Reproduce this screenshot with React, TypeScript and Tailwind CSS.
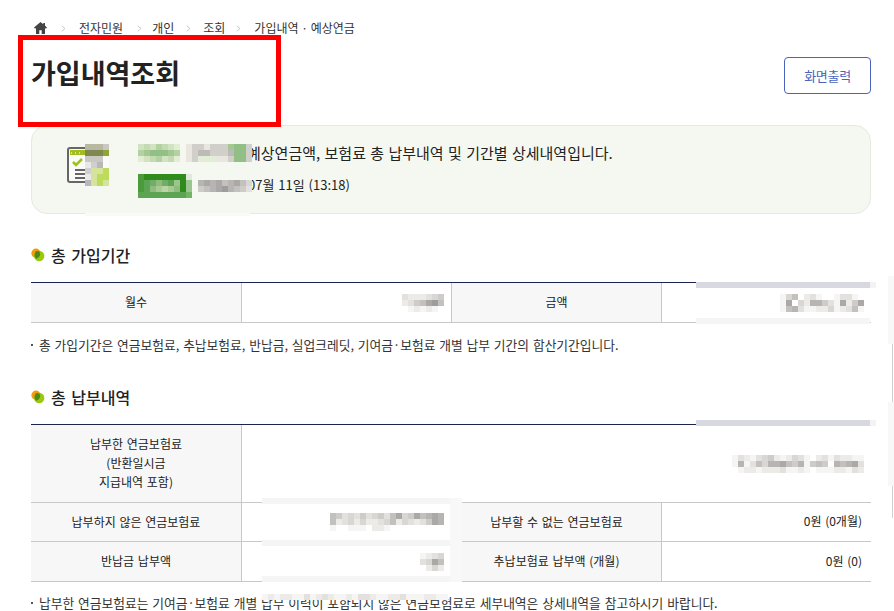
const GREY = ["#ffffff","#f5f5f3","#ecebe8","#e2e1dd","#d8d7d3","#cdccc8","#c2c1be","#b6b5b3","#aaa9a8","#9e9d9e"];
const GREEN = ["#f5f8f0","#e1edd5","#d2e3c2","#c3dab2","#b3d2a2","#a3c892","#92bf85","#e8e6df","#d0cfca","#bcbbb7"];
const HEAD = ["#4b9b3c","#5ba451","#70ac6a","#8fbb7d","#a9c994","#bcd3a4","#2f8c1c","#9ac590","#dfeadb","#74b266"];
const ICON = ["#b9b9a3","#c9c9c2","#8fa534","#80884f","#fafbf8","#e8e8e8","#cfcfcf","#b8b8b8","#d5e39c","#bddb5c"];

function Mosaic({ rows, palette = GREY }: { rows: string[]; palette?: string[] }) {
  return (
    <div className="flex shrink-0 flex-col">
      {rows.map((row, r) => (
        <div key={r} className="flex">
          {row.split("").map((c, i) => (
            <div key={i} className="h-[6px] w-[6px] shrink-0" style={{ backgroundColor: c === "." ? "transparent" : palette[Number(c)] }} />
          ))}
        </div>
      ))}
    </div>
  );
}

function Bullet() {
  return (
    <svg width="14" height="14" viewBox="0 0 14 14" className="shrink-0">
      <circle cx="5" cy="5.2" r="4.6" fill="#f59a0c" />
      <circle cx="8.2" cy="8" r="5.2" fill="#9cc80f" />
      <path d="M5.2 3.1a5.2 5.2 0 0 0-.1 7.6A4.6 4.6 0 0 0 8.4 3.600 5 5 0 0 0 5.200 3.100Z" fill="#4f8a12" />
    </svg>
  );
}

function Sep() {
  return (
    <svg width="5" height="7" viewBox="0 0 5 7" className="shrink-0">
      <path d="M.8.8 4 3.500.8 6.200" fill="none" stroke="#c8c8c8" strokeWidth="1" />
    </svg>
  );
}

function Th({ children, h }: { children: React.ReactNode; h: string }) {
  return (
    <div className={`flex items-center justify-center border-r border-b border-[#c8c8c8] bg-[#f7f7f7] pb-[2px] text-center text-[12px] leading-[19px] text-[#222] ${h}`}>
      <div>{children}</div>
    </div>
  );
}

function Td({ children, h }: { children?: React.ReactNode; h: string }) {
  return (
    <div className={`flex items-center justify-end border-b border-[#c8c8c8] pb-[2px] pr-[9px] text-[12px] text-[#222] ${h}`}>
      {children}
    </div>
  );
}

export default function App() {
  return (
    <div className="relative h-[611px] w-[894px] overflow-hidden bg-white pl-[31px] pr-[23px] font-['Noto_Sans_CJK_KR','Noto_Sans',sans-serif] text-[#222] [word-spacing:1px]">
      <nav className="flex h-[56px] items-center pl-[3px] text-[12px] text-[#333]">
        <svg width="13" height="12" viewBox="0 0 13 12" className="mr-[14px] shrink-0">
          <path d="M6.500 0 0 5.600 1 6.700l1-.8V12h3.300V8.200h2.400V12H11V5.900l1 .8 1-1.100L11 3.800V1H9.300v1.300Z" fill="#444" />
        </svg>
        <Sep />
        <span className="ml-[13px] mr-[14px]">전자민원</span>
        <Sep />
        <span className="ml-[10px] mr-[12px]">개인</span>
        <Sep />
        <span className="ml-[12px] mr-[11px]">조회</span>
        <Sep />
        <span className="ml-[13px] [word-spacing:0]">가입내역 · 예상연금</span>
      </nav>

      <div className="flex h-[69px] items-start justify-between">
        <h1 className="mt-[-1px] text-[27px] font-bold leading-[36px] text-[#222]">가입내역조회</h1>
        <button className="mt-[1px] h-[37px] w-[87px] rounded-[4px] border border-[#4a63bd] text-[13px] tracking-[-0.3px] text-[#4a63bd]">화면출력</button>
      </div>

      <section className="flex h-[89px] items-start rounded-[16px] border border-[#e6eadd] bg-[#f5f8f0] pl-[35px]">
        <div className="mt-[21px] flex h-[36px] w-[71px] shrink-0">
          <svg width="40" height="36" viewBox="0 0 40 36">
            <rect x="1" y="1" width="38" height="34" rx="2" fill="#fafbf8" stroke="#666" strokeWidth="2" />
            <rect x="3" y="3" width="34" height="5" fill="#a3bd1f" />
            <path d="M4 6h1M8 6h1M12 6h1" stroke="#e8f0c0" strokeWidth="1.500" />
            <path d="M6 15l3 3 6-6" fill="none" stroke="#9cc414" strokeWidth="2.500" />
            <path d="M8 23h10M8 27h10M8 31h10" stroke="#666" strokeWidth="1.800" />
          </svg>
        </div>
        <div className="pt-[18px]">
          <div className="flex h-[18px] items-center text-[15px]">
            <span className="relative z-10">
              <Mosaic rows={["2324321078878885668", "4566654078998889668", "1234231078111778668"]} palette={GREEN} />
            </span>
            <span className="ml-[-5px] whitespace-nowrap">예상연금액, 보험료 총 납부내역 및 기간별 상세내역입니다.</span>
          </div>
          <div className="mt-[12px] flex h-[24px] items-center text-[13px]">
            <Mosaic rows={["066666668", "012321767", "013454367", "111111119"]} palette={HEAD} />
            <span className="w-[6px]" />
            <span className="relative z-10">
              <Mosaic rows={["787867864", "567897653"]} />
            </span>
            <span className="mb-[2px] ml-[-4px] whitespace-nowrap">07월 11일 (13:18)</span>
          </div>
        </div>
      </section>

      <h2 className="mt-[28px] flex h-[26px] items-center gap-[6px] text-[16px] font-medium [word-spacing:2px]"><Bullet />총 가입기간</h2>
      <div className="mt-[14px] grid grid-cols-[211px_210px_210px_209px] border-t border-[#1b2550]">
        <Th h="h-[40px]">월수</Th>
        <div className="flex h-[40px] items-center justify-end border-r border-b border-[#c8c8c8] pr-[7px]">
          <Mosaic rows={["3222345", "2356896", "0121210"]} />
        </div>
        <Th h="h-[40px]">금액</Th>
        <div className="flex h-[40px] items-center justify-end border-b border-[#c8c8c8] pr-[7px]">
          <Mosaic rows={["14602310013310", "18042775318258", "16731122412361"]} />
        </div>
      </div>
      <p className="mt-[13px] flex items-center text-[12.75px] leading-[18px] text-[#333]"><span className="mr-[6px] h-[2px] w-[2px] bg-[#555]" />총 가입기간은 연금보험료, 추납보험료, 반납금, 실업크레딧, 기여금·보험료 개별 납부 기간의 합산기간입니다.</p>

      <h2 className="mt-[30px] flex h-[26px] items-center gap-[6px] text-[16px] font-medium [word-spacing:2px]"><Bullet />총 납부내역</h2>
      <div className="mt-[14px] grid grid-cols-[211px_210px_210px_209px] border-t border-[#1b2550]">
        <Th h="h-[78px]">납부한 연금보험료<br />(반환일시금<br />지급내역 포함)</Th>
        <div className="col-span-3 flex h-[78px] items-center justify-end border-b border-[#c8c8c8] pr-[7px]">
          <Mosaic rows={["1321345212431023132211", "1713647786571565076783", "0122122231121011122132"]} />
        </div>
        <Th h="h-[39px]">납부하지 않은 연금보험료</Th>
        <div className="flex h-[39px] items-center justify-end border-r border-b border-[#c8c8c8] pr-[7px]">
          <Mosaic rows={["6534353453684586787", "6234242234624323587", "1001110221000000000"]} />
        </div>
        <Th h="h-[39px]">납부할 수 없는 연금보험료</Th>
        <Td h="h-[39px]">0원 (0개월)</Td>
        <Th h="h-[40px]">반납금 납부액</Th>
        <div className="flex h-[40px] items-center justify-end border-r border-b border-[#c8c8c8] pr-[7px]">
          <Mosaic rows={["1234", "3486", "0242"]} />
        </div>
        <Th h="h-[40px]">추납보험료 납부액 (개월)</Th>
        <Td h="h-[40px]">0원 (0)</Td>
      </div>
      <p className="mt-[12px] flex items-center whitespace-nowrap text-[12.75px] leading-[18px] text-[#333]"><span className="mr-[6px] h-[2px] w-[2px] bg-[#555]" />납부한 연금보험료는 기여금·보험료 개별 납부 이력이 포함되지 않은 연금보험료로 세부내역은 상세내역을 참고하시기 바랍니다.</p>

      {/* annotation */}
      <div className="absolute left-[18px] top-[35px] h-[92px] w-[263px] border-[5px] border-[#ff0000]" />
      {/* retouch smears */}
      <div className="absolute left-[85px] top-[144px]">
        <Mosaic rows={["0001", "3332", "1114", "5674", "6889", "5899", "7898"]} palette={ICON} />
      </div>
      <div className="absolute left-[85px] top-[213px] h-[3px] w-[165px] bg-[#fafbf7]" />
      <div className="absolute left-[696px] top-[282px] h-[6px] w-[174px] bg-[#d8d8e0]" />
      <div className="absolute left-[870px] top-[282px] h-[6px] w-[6px] bg-[#f3f3f5]" />
      <div className="absolute left-[696px] top-[318px] h-[6px] w-[174px] bg-[#f5f5f5]" />
      <div className="absolute left-[696px] top-[420px] h-[6px] w-[174px] bg-[#d8d8e0]" />
      <div className="absolute left-[870px] top-[420px] h-[6px] w-[6px] bg-[#f3f3f5]" />
      <div className="absolute left-[262px] top-[498px] h-[6px] w-[200px] bg-[#f5f5f5]" />
      <div className="absolute left-[262px] top-[540px] h-[6px] w-[200px] bg-[#f5f5f5]" />
      <div className="absolute left-[262px] top-[576px] h-[6px] w-[200px] bg-[#f5f5f5]" />
      <div className="absolute left-[450px] top-[498px] h-[84px] w-[12px] bg-[#f8f8f8]" />
      <div className="absolute left-[262px] top-[594px]">
        <Mosaic rows={["1212211312321121332112231112211"]} />
      </div>
      <div className="absolute left-[888px] top-[276px] h-[68px] w-[6px] bg-[#f8f8f8]" />
      <div className="absolute left-[892px] top-[344px] h-[58px] w-[1px] bg-[#d0d0d0]" />
      <div className="absolute left-[888px] top-[402px] h-[84px] w-[6px] bg-[#f8f8f8]" />
      <div className="absolute left-[892px] top-[486px] h-[32px] w-[1px] bg-[#d0d0d0]" />
    </div>
  );
}
